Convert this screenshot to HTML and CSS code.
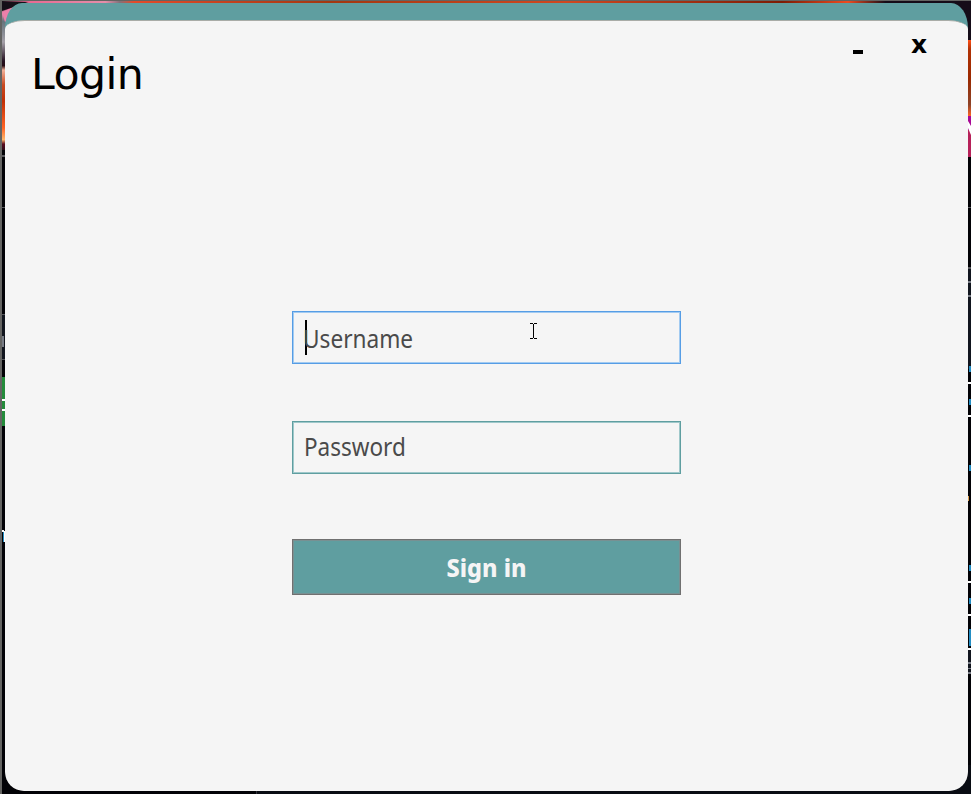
FILE: index.html
```
<!DOCTYPE html>
<html lang="en">
<head>
<meta charset="utf-8">
<title>Login</title>
<link rel="stylesheet" href="styles.css">
</head>
<body>
<svg class="desktop" width="971" height="794" viewBox="0 0 971 794" aria-hidden="true">
  <defs>
    <linearGradient id="left" x1="0" y1="0" x2="0" y2="1">
      <stop offset="0" stop-color="#26131e"/><stop offset=".08" stop-color="#ed88b0"/><stop offset=".13" stop-color="#66737b"/><stop offset=".27" stop-color="#a4a0a8"/><stop offset=".4" stop-color="#241020"/><stop offset=".43" stop-color="#240b14"/><stop offset=".46" stop-color="#f1b098"/><stop offset=".56" stop-color="#c84a22"/><stop offset=".67" stop-color="#c12f05"/><stop offset=".85" stop-color="#ff6426"/><stop offset=".93" stop-color="#ffb66c"/><stop offset=".96" stop-color="#5a0b20"/><stop offset="1" stop-color="#300b18"/>
    </linearGradient>
    <linearGradient id="top">
      <stop offset="0" stop-color="#151018"/><stop offset=".03" stop-color="#e96b93"/><stop offset=".11" stop-color="#e58eaa"/><stop offset=".125" stop-color="#82717a"/><stop offset=".14" stop-color="#e44a2a"/><stop offset=".35" stop-color="#a33710"/><stop offset=".6" stop-color="#d14720"/><stop offset=".83" stop-color="#7d1c05"/><stop offset=".9" stop-color="#ef4b20"/><stop offset=".94" stop-color="#150c18"/><stop offset="1" stop-color="#150c18"/>
    </linearGradient>
    <linearGradient id="right" x1="0" y1="0" x2="0" y2="1">
      <stop offset="0" stop-color="#ff5017"/><stop offset=".12" stop-color="#b13205"/><stop offset=".5" stop-color="#9b2900"/><stop offset=".85" stop-color="#8d4328"/><stop offset="1" stop-color="#ff6626"/>
    </linearGradient>
  </defs>
  <path fill="#020206" d="M0 0h971v794H0z"/>
  <path fill="url(#left)" d="M2 2h24v148H2z"/>
  <path fill="url(#top)" d="M2 1h940v5H2z"/>
  <path fill="#ed80aa" d="M2 12 22 3h12L5 22z"/>
  <path fill="#151018" d="M2 2h26L2 11z"/>
  <path fill="#150c18" d="M940 1h31v40h-31z"/>
  <path fill="url(#right)" d="M966 40h5v76h-5z"/>
  <path fill="#a80895" d="M966 116h5v16h-5z"/>
  <path fill="#b62159" d="M966 130h5v27h-5z"/>
  <path fill="#fff" d="m968 121 3 5v9l-3-7z"/>
  <path fill="#55565a" d="M2 155h3v2H2zM2 207h3v1H2zM968 207h3v1h-3zM968 267h3v2h-3zM2 314h3v1H2zM2 359h3v1H2z"/>
  <path fill="#11151e" d="M2 315h3v44H2zM968 269h3v100h-3zM968 650h3v24h-3z"/>
  <path fill="#777b84" d="M2 336h2v11H2zM968 281h3v2h-3zM968 295h3v2h-3zM968 662h3v2h-3zM968 668h3v1h-3zM968 672h3v2h-3z"/>
  <path fill="#248b3b" d="M2 377h3v49H2z"/>
  <path fill="#fff" d="M2 399h3v2H2zM2 409h3v2H2zM2 530h2v1h1v11H4v-10H2zM968 382h3v2h-3zM968 415h3v2h-3zM968 581h3v2h-3zM968 614h3v2h-3zM968 648h3v2h-3z"/>
  <path fill="#238dc3" d="M969 366h2v6h-2zM969 399h2v6h-2zM969 465h2v6h-2zM969 565h2v6h-2zM969 598h2v6h-2zM969 629h2v17h-2zM3 532h1v10H3z"/>
  <path fill="#d79c4d" d="M968 496h1v5h-1z"/>
  <path fill="#090c13" d="M256 790h715v4H256zM945 765h26v29h-26z"/>
  <path fill="#303039" d="M256 791h1v3h-1z"/>
  <path fill="#646462" d="M0 0h971v1H0zM0 0h2v794H0z"/>
</svg>
<main class="window">
  <div class="panel">
    <header class="titlebar">
      <h1 class="title">Login</h1>
      <div class="controls">
        <button class="control" aria-label="Minimize"><svg width="10" height="4"><path d="M0 0h10v4H0z"/></svg></button>
        <button class="control close">x</button>
      </div>
    </header>
    <form class="form">
      <label class="field focused"><i class="caret"></i><span class="label">Username</span></label>
      <label class="field password"><span class="label">Password</span></label>
      <button class="submit" type="button"><span>Sign in</span></button>
    </form>
  </div>
</main>
<svg class="pointer" width="7" height="16" viewBox="0 0 7 16" aria-hidden="true"><path fill="#000" d="M0 0h3v1h1V0h3v1H4v14h3v1H4v-1H3v1H0v-1h3V1H0z"/></svg>
</body>
</html>
```
FILE: styles.css
```
* { box-sizing: border-box; }
body { margin: 0; width: 971px; height: 794px; overflow: hidden; padding: 3px 3px 3px 5px; font-family: "Noto Sans", sans-serif; }
button { padding: 0; border: 0; background: none; font-family: inherit; }
.desktop { position: absolute; left: 0; top: 0; z-index: -1; }
.window { height: 788px; padding-top: 17px; border-radius: 17px 17px 19px 19px / 25px 25px 19px 19px; background: linear-gradient(#5f9ea0 0 50px, transparent 50px); overflow: hidden; }
.panel { height: 771px; border-top: 1px solid #a9aca7; border-radius: 20px 20px 17px 17px / 9px 9px 17px 17px; background: #f5f5f5; }
.titlebar { display: flex; justify-content: space-between; height: 100px; padding: 25px 41px 0 26px; }
.title { margin: 0; color: #000; font: 400 42.67px/56px "DejaVu Sans", sans-serif; letter-spacing: -.6px; }
.controls { display: flex; gap: 48px; height: 20px; margin-top: -10px; }
.control { display: flex; align-items: center; color: #000; }
.control svg { margin-top: 12px; }
.close { justify-content: center; width: 16px; margin-top: -2px; font: 700 25px/20px "DejaVu Sans", sans-serif; }
.form { display: flex; flex-direction: column; width: 389px; margin: 190px 0 0 287px; }
.field { position: relative; display: flex; align-items: center; height: 53px; padding-left: 11px; border: 1px solid #5f9ea0; box-shadow: inset 0 0 0 1px #9fc8ca; }
.focused { padding-left: 10px; border-color: #569de5; box-shadow: inset 0 0 0 1px #a3cbf1; }
.label { color: #4a4a4a; font-size: 25px; line-height: 34px; transform: scaleX(.905); transform-origin: left; }
.caret { position: absolute; left: 12px; top: 8px; width: 2px; height: 35px; background: #000; }
.password { margin-top: 57px; }
.password .label { transform: scaleX(.9); margin-top: -3px; }
.submit { height: 56px; margin-top: 65px; border: 1px solid #707070; box-shadow: inset 0 0 0 1px #789092; background: #5f9ea0; color: #f5f5f5; font-size: 25px; font-weight: 800; }
.submit span { display: inline-block; transform: scaleX(.94); }
.pointer { position: absolute; left: 530px; top: 323px; }
```
